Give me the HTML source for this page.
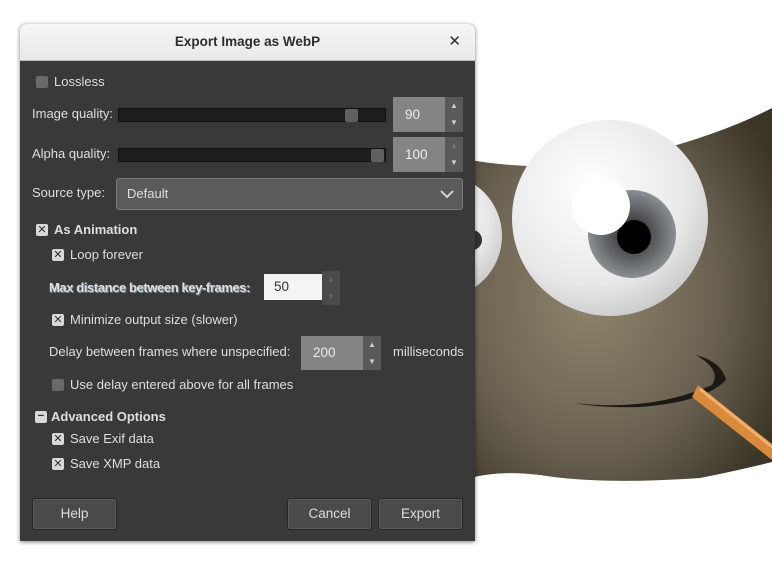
<!DOCTYPE html>
<html><head><style>
body{margin:0;width:772px;height:561px;background:#fff;position:relative;overflow:hidden;font-family:"Liberation Sans","DejaVu Sans",sans-serif;font-size:13px;color:#dedede}
.a{position:absolute}
#dlg{left:20px;top:24px;width:455px;height:517px;background:#393939;border-radius:6px 6px 0 0;box-shadow:0 1px 4px rgba(0,0,0,.5)}
#tb{left:0;top:0;width:455px;height:36px;background:linear-gradient(#f6f6f6,#e8e8e8);border-radius:6px 6px 0 0;border-bottom:1px solid #bbb;color:#2e2e2e;font-weight:bold;font-size:13.5px;text-align:center;line-height:36px}
.cb{width:12px;height:12px;background:#6a6a6a;border-radius:2px;color:#fff;font-size:11px;line-height:12px;text-align:center;font-weight:bold}
.cb.x{background:#d8d8d8;color:#333}
.t{line-height:16px;white-space:nowrap}
.trk{height:12px;background:#1e1e1e;border:1px solid #111}
.hdl{width:13px;height:13px;background:#606060;border-radius:2px}
.spn{background:#848484;color:#eee;line-height:35px;font-size:13.5px}
.arr{background:#595959;color:#ccc;font-size:8px;text-align:center}
.btn{height:30px;background:#4a4a4a;border:1px solid #262626;box-shadow:inset 0 0 0 1px #5a5a5a;border-radius:3px;text-align:center;line-height:30px;color:#ddd;font-size:13.5px}
</style></head><body>
<svg class="a" style="left:0;top:0" width="772" height="561">
<defs>
<radialGradient id="bg" cx="0.4" cy="0.5" r="0.7"><stop offset="0" stop-color="#8f856d"/><stop offset="0.6" stop-color="#6a6150"/><stop offset="1" stop-color="#3c3628"/></radialGradient>
<radialGradient id="eg" cx="0.4" cy="0.35" r="0.7"><stop offset="0" stop-color="#ffffff"/><stop offset="0.7" stop-color="#e8e8e8"/><stop offset="1" stop-color="#c8c8c8"/></radialGradient>
<radialGradient id="ig" cx="0.5" cy="0.5" r="0.5"><stop offset="0" stop-color="#222"/><stop offset="1" stop-color="#8a8f94"/></radialGradient>
</defs>
<path d="M470 160 Q560 175 640 155 Q720 135 772 108 L772 462 Q740 470 700 478 Q600 485 540 475 Q500 470 470 478 Z" fill="url(#bg)"/>
<circle cx="440" cy="236" r="62" fill="url(#eg)"/>
<circle cx="472" cy="240" r="10" fill="#333"/>
<circle cx="610" cy="218" r="98" fill="url(#eg)"/>
<circle cx="632" cy="234" r="44" fill="url(#ig)"/>
<circle cx="634" cy="237" r="17" fill="#000"/>
<circle cx="601" cy="206" r="29" fill="#fff"/>
<path d="M575 403 Q650 412 712 385 Q722 370 696 355 Q722 362 726 380 Q705 402 640 407 Q600 408 575 403 Z" fill="#1c1812"/>
<path d="M698 385 L772 444 L772 460 L692 397 Z" fill="#d98a3a"/>
<path d="M700 389 L772 447" stroke="#f0b070" stroke-width="3"/>
</svg>
<div id="dlg" class="a">
<div id="tb" class="a">Export Image as WebP<span class="a" style="right:14px;top:0;font-size:15px">✕</span></div>
<div class="a cb" style="left:16px;top:52px"></div><div class="a t" style="left:34px;top:50px">Lossless</div>
<div class="a t" style="left:12px;top:82px">Image quality:</div>
<div class="a trk" style="left:98px;top:84px;width:266px"></div><div class="a hdl" style="left:325px;top:85px"></div>
<div class="a spn" style="left:373px;top:73px;width:40px;height:35px;padding-left:12px">90</div>
<div class="a arr" style="left:425px;top:73px;width:18px;height:35px;line-height:17px">▲<br>▼</div>
<div class="a t" style="left:12px;top:122px">Alpha quality:</div>
<div class="a trk" style="left:98px;top:124px;width:266px"></div><div class="a hdl" style="left:351px;top:125px"></div>
<div class="a spn" style="left:373px;top:113px;width:40px;height:35px;padding-left:12px">100</div>
<div class="a arr" style="left:425px;top:113px;width:18px;height:35px;line-height:17px;color:#777">▲<br><span style="color:#ccc">▼</span></div>
<div class="a t" style="left:12px;top:161px">Source type:</div>
<div class="a" style="left:96px;top:154px;width:345px;height:30px;background:#5b5b5b;border:1px solid #7a7a7a;border-radius:3px"><span class="a t" style="left:10px;top:7px">Default</span><svg class="a" style="right:8px;top:9px" width="14" height="12"><path d="M1 3 L7 9 L13 3" stroke="#ddd" stroke-width="1.8" fill="none"/></svg></div>
<div class="a cb x" style="left:16px;top:200px">✕</div><div class="a t" style="left:34px;top:198px;font-weight:bold">As Animation</div>
<div class="a cb x" style="left:32px;top:225px">✕</div><div class="a t" style="left:50px;top:223px">Loop forever</div>
<div class="a t" style="left:29px;top:256px;font-weight:bold;letter-spacing:-0.4px;text-shadow:1px 1px 0 #789">Max distance between key-frames:</div>
<div class="a" style="left:244px;top:250px;width:48px;height:26px;background:#f4f4f4;color:#333;font-size:13.5px;line-height:26px;padding-left:10px">50</div>
<div class="a arr" style="left:302px;top:247px;width:18px;height:34px;line-height:17px;background:#4a4a4a;color:#666">▲<br>▼</div>
<div class="a cb x" style="left:32px;top:290px">✕</div><div class="a t" style="left:50px;top:288px">Minimize output size (slower)</div>
<div class="a t" style="left:29px;top:320px">Delay between frames where unspecified:</div>
<div class="a spn" style="left:281px;top:312px;width:50px;height:34px;line-height:34px;padding-left:12px">200</div>
<div class="a arr" style="left:343px;top:312px;width:18px;height:34px;line-height:17px">▲<br>▼</div>
<div class="a t" style="left:373px;top:320px">milliseconds</div>
<div class="a cb" style="left:32px;top:355px"></div><div class="a t" style="left:50px;top:353px">Use delay entered above for all frames</div>
<div class="a cb x" style="left:15px;top:387px;line-height:10px">−</div><div class="a t" style="left:31px;top:385px;font-weight:bold">Advanced Options</div>
<div class="a cb x" style="left:32px;top:409px">✕</div><div class="a t" style="left:50px;top:407px">Save Exif data</div>
<div class="a cb x" style="left:32px;top:434px">✕</div><div class="a t" style="left:50px;top:432px">Save XMP data</div>
<div class="a btn" style="left:12px;top:474px;width:83px">Help</div>
<div class="a btn" style="left:267px;top:474px;width:83px">Cancel</div>
<div class="a btn" style="left:358px;top:474px;width:83px">Export</div>
</div>
</body></html>
